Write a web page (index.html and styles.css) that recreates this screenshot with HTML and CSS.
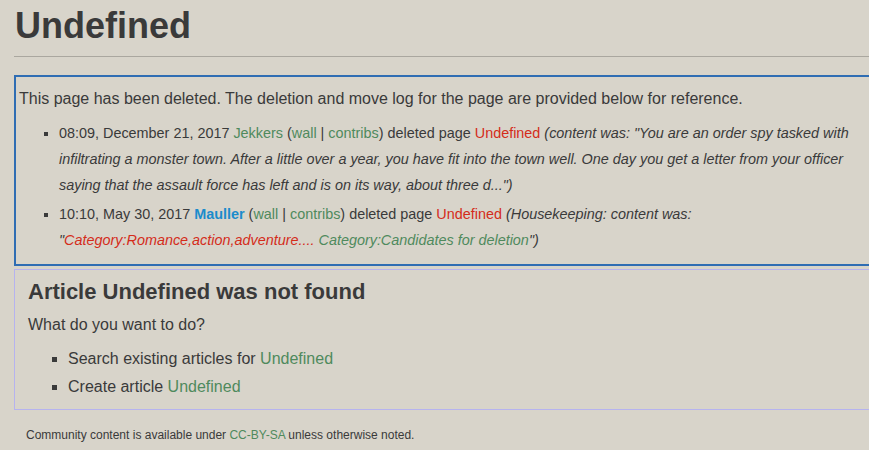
FILE: index.html
```html
<!DOCTYPE html>
<html>
<head>
<meta charset="utf-8">
<link rel="stylesheet" href="styles.css">
</head>
<body>
<div class="page">
  <h1 class="title">Undefined</h1>
  <div class="rule"></div>
  <div class="deleted">
    <p class="intro">This page has been deleted. The deletion and move log for the page are provided below for reference.</p>
    <ul class="log">
      <li>08:09, December 21, 2017 <a class="g">Jekkers</a> (<a class="g">wall</a> | <a class="g">contribs</a>) deleted page <a class="r">Undefined</a> <i>(content was: "You are an order spy tasked with infiltrating a monster town. After a little over a year, you have fit into the town well. One day you get a letter from your officer saying that the assault force has left and is on its way, about three d...")</i></li>
      <li>10:10, May 30, 2017 <a class="b">Mauller</a> (<a class="g">wall</a> | <a class="g">contribs</a>) deleted page <a class="r">Undefined</a> <i>(Housekeeping: content was: "<a class="r">Category:Romance,action,adventure....</a> <a class="g">Category:Candidates for deletion</a>")</i></li>
    </ul>
  </div>
  <div class="notfound">
    <h2 class="nf-title">Article Undefined was not found</h2>
    <p class="nf-q">What do you want to do?</p>
    <ul class="nf-list">
      <li>Search existing articles for <a class="g">Undefined</a></li>
      <li>Create article <a class="g">Undefined</a></li>
    </ul>
  </div>
  <div class="footer">Community content is available under <a class="g">CC-BY-SA</a> unless otherwise noted.</div>
</div>
</body>
</html>
```
FILE: styles.css
```css
html, body {
  margin: 0;
  padding: 0;
  overflow: hidden;
  background: #d8d4ca;
}
body {
  font-family: "Liberation Sans", Arial, sans-serif;
  color: #3a3a3a;
}
.page {
  width: 880px;
  padding-left: 14px;
  padding-top: 4px;
}
.title {
  margin: 0;
  padding-left: 1px;
  font-size: 36px;
  line-height: 44px;
  font-weight: bold;
  color: #3a3a3a;
}
.rule {
  margin-top: 8px;
  height: 1px;
  background: #aaa79f;
}
a { text-decoration: none; }
.g { color: #4f8a5d; }
.r { color: #d42c1a; }
.b { color: #1b8ccc; font-weight: bold; }
.deleted {
  margin-top: 18px;
  border: 2px solid #2f6db3;
  border-right: none;
  padding: 10px 0 11px 3px;
}
.intro {
  margin: 0;
  font-size: 16px;
  line-height: 24px;
}
.log {
  margin: 9px 0 0 0;
  padding-left: 40px;
  width: 814px;
  list-style: square;
  font-size: 14.4px;
  line-height: 26px;
}
.log li + li { margin-top: 3px; }
.log i { font-style: italic; }
.notfound {
  margin-top: 3px;
  border: 1px solid #b6b3ef;
  border-right: none;
  padding: 8px 0 8px 13px;
}
.nf-title {
  margin: 0;
  font-size: 22px;
  line-height: 28px;
  font-weight: bold;
}
.nf-q {
  margin: 7px 0 0 0;
  font-size: 16px;
  line-height: 24px;
}
.nf-list {
  margin: 8px 0 0 0;
  padding-left: 40px;
  list-style: square;
  font-size: 16px;
  line-height: 28px;
}
.footer {
  margin-top: 17px;
  padding-left: 12px;
  font-size: 12px;
  line-height: 16px;
}
```
